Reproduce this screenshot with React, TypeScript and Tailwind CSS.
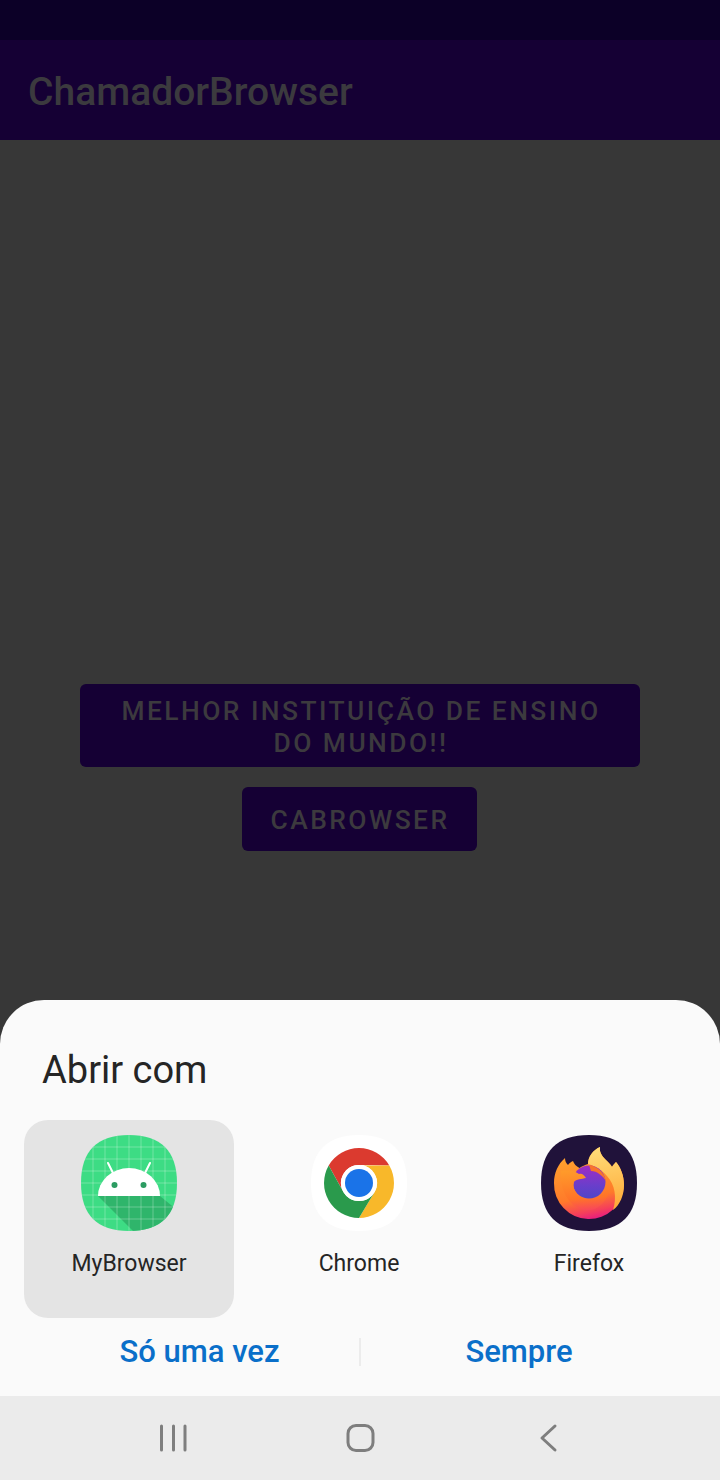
const squircle =
  "M48 0C80 0 96 16 96 48C96 80 80 96 48 96C16 96 0 80 0 48C0 16 16 0 48 0Z";

function AndroidIcon() {
  const lines = [12, 24, 36, 48, 60, 72, 84];
  return (
    <svg width="96" height="96" viewBox="0 0 96 96">
      <defs>
        <clipPath id="android-clip">
          <path d={squircle} />
        </clipPath>
      </defs>
      <g clipPath="url(#android-clip)">
        <rect width="96" height="96" fill="#3ddc84" />
        <path d="M17 61L52 96H96V75L79 61Z" fill="#2fb56b" />
        {lines.map((n) => (
          <g key={n} stroke="#ffffff" strokeOpacity="0.28" strokeWidth="1">
            <line x1={n} y1="0" x2={n} y2="96" />
            <line x1="0" y1={n} x2="96" y2={n} />
          </g>
        ))}
        <path d="M17 61A31 28 0 0 1 79 61Z" fill="#ffffff" />
        <g stroke="#ffffff" strokeWidth="2" strokeLinecap="round">
          <line x1="32" y1="38" x2="27" y2="28" />
          <line x1="64" y1="38" x2="69" y2="28" />
        </g>
        <circle cx="33.5" cy="50" r="3" fill="#2c9c62" />
        <circle cx="62.5" cy="50" r="3" fill="#2c9c62" />
      </g>
    </svg>
  );
}

function ChromeIcon() {
  return (
    <svg width="96" height="96" viewBox="0 0 96 96">
      <path d={squircle} fill="#ffffff" />
      <path d="M17.7 30.5A35 35 0 0 1 78.3 30.5L48 30A18 18 0 0 0 32.4 57Z" fill="#db3a2f" />
      <path d="M78.3 30.5A35 35 0 0 1 48 83L63.6 57A18 18 0 0 0 48 30Z" fill="#f8b82a" />
      <path d="M48 83A35 35 0 0 1 17.7 30.5L32.4 57A18 18 0 0 0 63.6 57Z" fill="#2a9a4c" />
      <circle cx="48" cy="48" r="18" fill="#ffffff" />
      <circle cx="48" cy="48" r="14" fill="#1a73e8" />
    </svg>
  );
}

function FirefoxIcon() {
  return (
    <svg width="96" height="96" viewBox="0 0 96 96">
      <defs>
        <linearGradient id="fx-body" x1="0.3" y1="0" x2="0.5" y2="1">
          <stop offset="0" stopColor="#ffa92e" />
          <stop offset="0.7" stopColor="#ff7a2a" />
          <stop offset="0.9" stopColor="#f5405a" />
          <stop offset="1" stopColor="#e9207c" />
        </linearGradient>
        <linearGradient id="fx-flame" x1="0.5" y1="0" x2="0.6" y2="1">
          <stop offset="0" stopColor="#ffdc78" />
          <stop offset="1" stopColor="#ffa836" />
        </linearGradient>
        <linearGradient id="fx-swoosh" x1="0.4" y1="0" x2="0.5" y2="1">
          <stop offset="0" stopColor="#ff9a2a" />
          <stop offset="0.7" stopColor="#ff7428" />
          <stop offset="1" stopColor="#f8485a" />
        </linearGradient>
        <linearGradient id="fx-globe" x1="0.5" y1="0" x2="0.5" y2="1">
          <stop offset="0" stopColor="#a02cc4" />
          <stop offset="0.6" stopColor="#6a3ecb" />
          <stop offset="1" stopColor="#4f46c8" />
        </linearGradient>
      </defs>
      <path d={squircle} fill="#20123a" />
      <path
        d="M13 48C13 38 17 29 24 23C24 26 25 28 27 30C28 28 30 27 32 26C33 29 35 31 38.5 33C41 31 44 30 47 29C47 22 52 15 59 12C58 18 62 22 66 26C68 28 70 30 71 32C72 30 74 28 75 27C80 33 83 41 83 50A35 35 0 0 1 13 48Z"
        fill="url(#fx-body)"
      />
      <path
        d="M47 29C47 22 52 15 59 12C58 18 62 22 66 26C68 28 70 30 71 32C72 30 74 28 75 27C80 33 83 41 83 50C83 60 79 70 72 75C76 62 74 50 66 41C60 34 54 31 47 29Z"
        fill="url(#fx-flame)"
      />
      <circle cx="48" cy="47" r="16.5" fill="url(#fx-globe)" />
      <path
        d="M20 36C26 34 34 36 38 39C41 38 43 40 45 43C41 44 35 44 33 47C31 55 37 63 46 64C55 65 63 60 68 52C68 66 56 77 43 75C28 72 18 54 20 36Z"
        fill="url(#fx-swoosh)"
      />
      <path d="M48 30C56 31 63 37 65 46C62 41 56 36 50 36Z" fill="#f8742c" />
    </svg>
  );
}

function AppItem({
  label,
  selected,
  children,
}: {
  label: string;
  selected?: boolean;
  children: React.ReactNode;
}) {
  return (
    <div
      className={`flex h-[198px] w-[210px] flex-col items-center rounded-[24px] pt-[15px] ${
        selected ? "bg-[#e4e4e4]" : ""
      }`}
    >
      {children}
      <span className="mt-[19px] text-[23px] leading-[28px] text-[#252525]">{label}</span>
    </div>
  );
}

export default function App() {
  return (
    <div className="flex h-[1480px] w-[720px] flex-col overflow-hidden bg-[#373737] font-['Roboto',sans-serif]">
      <div className="h-10 bg-[#0c0027]" />
      <div className="flex h-[100px] items-center bg-[#150034] pl-[28px] pt-[4px]">
        <h1 className="text-[39px] font-medium text-[#3b3a3e]">ChamadorBrowser</h1>
      </div>

      <main className="flex flex-1 flex-col items-center gap-5 pt-[544px]">
        <button className="h-[83px] w-[560px] rounded-[6px] bg-[#150034] px-8 pt-[2px] pl-[34px] text-[26.4px] leading-[32px] font-medium tracking-[2.45px] text-[#3c3a3e]">
          MELHOR INSTITUIÇÃO DE ENSINO DO MUNDO!!
        </button>
        <button className="mr-[1px] h-16 w-[235px] rounded-[6px] bg-[#150034] pt-[2px] pl-[1px] text-[26.4px] leading-[32px] font-medium tracking-[2.45px] text-[#3c3a3e]">
          CABROWSER
        </button>
      </main>

      <section className="h-[396px] rounded-t-[44px] bg-[#fafafa]">
        <h2 className="pt-[45px] pl-[42px] text-[38px] leading-[50px] text-[#252525]">Abrir com</h2>
        <div className="mt-[25px] flex gap-5 px-6">
          <AppItem label="MyBrowser" selected>
            <AndroidIcon />
          </AppItem>
          <AppItem label="Chrome">
            <ChromeIcon />
          </AppItem>
          <AppItem label="Firefox">
            <FirefoxIcon />
          </AppItem>
        </div>
        <div className="mt-[16px] flex items-center text-[31px] leading-[36px] font-medium text-[#0a6fc9]">
          <button className="w-[359px] pl-[40px]">Só uma vez</button>
          <div className="h-7 w-[2px] bg-[#ececec]" />
          <button className="w-[359px] pr-[43px]">Sempre</button>
        </div>
      </section>

      <nav className="flex h-[84px] items-center bg-[#ebebeb]">
        <div className="flex w-full justify-center">
          <svg width="720" height="32" viewBox="0 0 720 32" fill="none" stroke="#7e7e7e" strokeWidth="3" strokeLinecap="round" strokeLinejoin="round">
            <line x1="161.5" y1="4" x2="161.5" y2="28" />
            <line x1="173.5" y1="4" x2="173.5" y2="28" />
            <line x1="185" y1="4" x2="185" y2="28" />
            <rect x="348" y="3.5" width="25" height="25" rx="8" />
            <path d="M555 4L542 16L555 28" />
          </svg>
        </div>
      </nav>
    </div>
  );
}
